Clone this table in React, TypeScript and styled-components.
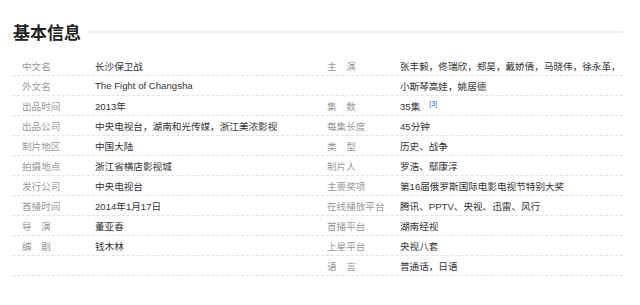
import React from 'react';
import styled, { createGlobalStyle } from 'styled-components';

const GlobalStyle = createGlobalStyle`
  body {
    margin: 0;
    background: #ffffff;
    font-family: "Liberation Sans", "Noto Sans CJK SC", sans-serif;
  }
`;

const Page = styled.div`
  width: 611px;
  padding: 20px 17px 0 12px;
`;

const TitleBar = styled.div`
  display: flex;
  align-items: center;
  gap: 7px;
  height: 24px;
  margin-bottom: 12px;
`;

const Title = styled.h2`
  margin: 0 0 0 1px;
  font-size: 17px;
  line-height: 24px;
  font-weight: bold;
  color: #222;
  font-family: "Noto Sans CJK SC", sans-serif;
`;

const TitleLine = styled.div`
  flex: 1;
  height: 2px;
  background: #efefef;
`;

const Rows = styled.div`
  display: flex;
  flex-direction: column;
`;

const Row = styled.div`
  display: grid;
  grid-template-columns: 73px 232px 73px 1fr;
  height: 20px;
  padding-left: 10px;
  border-bottom: 1px dashed #e3e3e3;
  box-sizing: border-box;
  align-items: center;
  font-size: 9.6px;
`;

const Label = styled.span`
  color: #999;
  white-space: nowrap;
`;

const Value = styled.span`
  color: #333;
  white-space: nowrap;
`;

const Cite = styled.sup`
  margin-left: 9px;
  font-size: 7px;
  color: #3366cc;
  vertical-align: 4px;
  line-height: 0;
`;

type Cell = [string, React.ReactNode];

const rows: [Cell, Cell][] = [
  [['中文名', '长沙保卫战'], ['主　演', '张丰毅，佟瑞欣，郑昊，戴娇倩，马晓伟，徐永革，']],
  [['外文名', 'The Fight of Changsha'], ['', '小斯琴高娃，姚居德']],
  [['出品时间', '2013年'], ['集　数', <>35集<Cite>[3]</Cite></>]],
  [['出品公司', '中央电视台，湖南和光传媒，浙江美浓影视'], ['每集长度', '45分钟']],
  [['制片地区', '中国大陆'], ['类　型', '历史、战争']],
  [['拍摄地点', '浙江省横店影视城'], ['制片人', '罗浩、鄢康淳']],
  [['发行公司', '中央电视台'], ['主要奖项', '第16届俄罗斯国际电影电视节特别大奖']],
  [['首播时间', '2014年1月17日'], ['在线播放平台', '腾讯、PPTV、央视、迅雷、风行']],
  [['导　演', '董亚春'], ['首播平台', '湖南经视']],
  [['编　剧', '钱木林'], ['上星平台', '央视八套']],
  [['', ''], ['语　言', '普通话，日语']],
];

export default function App() {
  return (
    <>
      <GlobalStyle />
      <Page>
        <TitleBar>
          <Title>基本信息</Title>
          <TitleLine />
        </TitleBar>
        <Rows>
          {rows.map(([left, right], i) => (
            <Row key={i}>
              <Label>{left[0]}</Label>
              <Value>{left[1]}</Value>
              <Label>{right[0]}</Label>
              <Value>{right[1]}</Value>
            </Row>
          ))}
        </Rows>
      </Page>
    </>
  );
}
